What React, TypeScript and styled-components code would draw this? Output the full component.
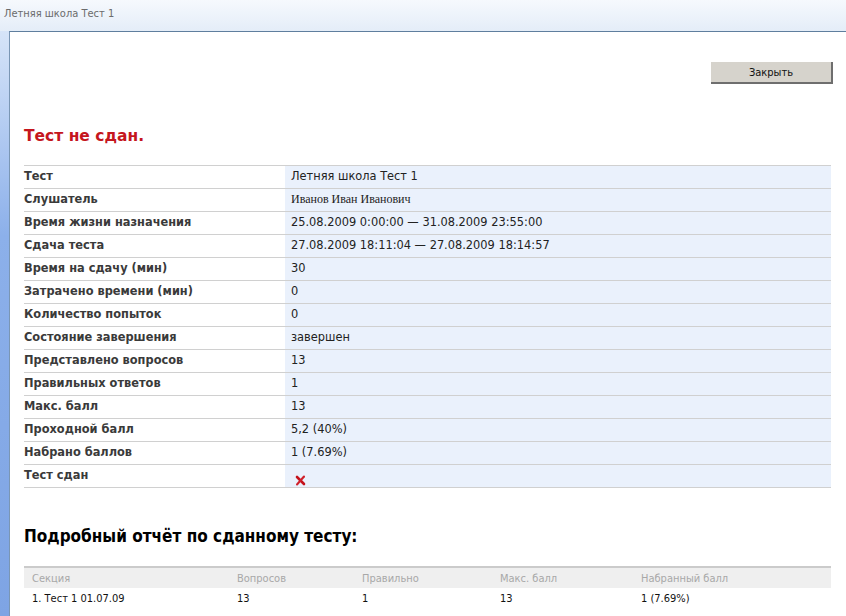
import styled, { createGlobalStyle } from 'styled-components'

const GlobalStyle = createGlobalStyle`
    body {
        margin: 0;
        background: #ffffff;
        font-family: "DejaVu Sans", Verdana, sans-serif;
    }
`

// window caption strip at the very top
const TitleBar = styled.div`
    height: 31px;
    display: flex;
    align-items: center;
    padding-left: 4px;
    background: linear-gradient(#f6f9fd, #e4edf8);
    color: #6b6b6b;
    font-family: "DejaVu Sans Condensed", "Liberation Sans", sans-serif;
    font-size: 11px;
    box-sizing: border-box;
    padding-bottom: 4px;
`

const Body = styled.div`
    display: flex;
    min-height: 585px;
`

const SideStrip = styled.div`
    width: 9px;
    background: linear-gradient(#d6e4f8, #8cb0ea 35%, #7ea4e4);
`

const Panel = styled.div`
    flex: 1;
    background: #ffffff;
    border-top: 1px solid #5f7e9e;
    border-left: 1px solid #7a96b4;
    padding: 30px 15px 0 14px;
`

const ButtonRow = styled.div`
    display: flex;
    justify-content: flex-end;
    margin-right: -2px;
`

const CloseButton = styled.button`
    width: 122px;
    height: 22px;
    background: #d6d3cc;
    border: none;
    border-right: 2px solid #6e6e6e;
    border-bottom: 2px solid #6e6e6e;
    font-family: "DejaVu Sans Condensed", "Liberation Sans", sans-serif;
    font-size: 11px;
    color: #111;
    padding: 0;
`

const Heading = styled.h2`
    margin: 41px 0 0;
    font-size: 15.5px;
    line-height: 22px;
    color: #c5161d;
    font-weight: bold;
`

const InfoTable = styled.div`
    margin-top: 18px;
    border-bottom: 1px solid #d0d0d0;
`

const InfoRow = styled.div`
    display: grid;
    grid-template-columns: 261px 1fr;
    height: 23px;
    box-sizing: border-box;
    border-top: 1px solid #d0d0d0;
`

const Label = styled.div`
    font-size: 11.4px;
    font-weight: bold;
    color: #3a3a3a;
    padding-top: 3px;
`

const Value = styled.div<{ $serif?: boolean }>`
    background: #eaf1fc;
    padding: 3px 0 0 6px;
    font-size: ${p => (p.$serif ? '12px' : '11.4px')};
    font-family: ${p => (p.$serif ? '"Liberation Serif", serif' : '"DejaVu Sans", sans-serif')};
    color: #222;
`

const FailIcon = styled.svg`
    display: block;
    margin: 7px 0 0 4px;
`

const ReportTitle = styled.h3`
    margin: 38px 0 0;
    font-family: "DejaVu Sans Condensed", "Liberation Sans", sans-serif;
    font-size: 17px;
    font-weight: bold;
    color: #000;
`

const ReportTable = styled.div`
    margin-top: 20px;
`

const ReportRow = styled.div<{ $head?: boolean }>`
    display: grid;
    grid-template-columns: 205px 125px 138px 141px 1fr;
    height: 20px;
    align-items: center;
    padding-left: 8px;
    background: ${p => (p.$head ? '#efefef' : 'transparent')};
    border-top: ${p => (p.$head ? '2px solid #cbcbcb' : 'none')};
    color: ${p => (p.$head ? '#a8a8a8' : '#111')};
    font-family: "DejaVu Sans Condensed", "Liberation Sans", sans-serif;
    font-size: 11px;
`

const rows: [string, string][] = [
    ['Тест', 'Летняя школа Тест 1'],
    ['Слушатель', 'Иванов Иван Иванович'],
    ['Время жизни назначения', '25.08.2009 0:00:00 — 31.08.2009 23:55:00'],
    ['Сдача теста', '27.08.2009 18:11:04 — 27.08.2009 18:14:57'],
    ['Время на сдачу (мин)', '30'],
    ['Затрачено времени (мин)', '0'],
    ['Количество попыток', '0'],
    ['Состояние завершения', 'завершен'],
    ['Представлено вопросов', '13'],
    ['Правильных ответов', '1'],
    ['Макс. балл', '13'],
    ['Проходной балл', '5,2 (40%)'],
    ['Набрано баллов', '1 (7.69%)'],
]

const reportHead = ['Секция', 'Вопросов', 'Правильно', 'Макс. балл', 'Набранный балл']
const reportData = ['1. Тест 1 01.07.09', '13', '1', '13', '1 (7.69%)']

function App() {
    return (
        <>
            <GlobalStyle />
            <TitleBar>Летняя школа Тест 1</TitleBar>
            <Body>
                <SideStrip />
                <Panel>
                    <ButtonRow>
                        <CloseButton>Закрыть</CloseButton>
                    </ButtonRow>
                    <Heading>Тест не сдан.</Heading>

                    <InfoTable>
                        {rows.map(([label, value]) => (
                            <InfoRow key={label}>
                                <Label>{label}</Label>
                                <Value $serif={label === 'Слушатель'}>{value}</Value>
                            </InfoRow>
                        ))}
                        <InfoRow>
                            <Label>Тест сдан</Label>
                            <Value>
                                {/* red cross = not passed */}
                                <FailIcon width="11" height="11" viewBox="0 0 11 11">
                                    <path d="M2 2 L9 9" stroke="#c4121b" strokeWidth="2.6" strokeLinecap="round" />
                                    <path d="M9 1.5 L2 9.5" stroke="#d0202a" strokeWidth="2" strokeLinecap="round" />
                                </FailIcon>
                            </Value>
                        </InfoRow>
                    </InfoTable>

                    <ReportTitle>Подробный отчёт по сданному тесту:</ReportTitle>
                    <ReportTable>
                        <ReportRow $head>
                            {reportHead.map(h => <div key={h}>{h}</div>)}
                        </ReportRow>
                        <ReportRow>
                            {reportData.map((d, i) => <div key={i}>{d}</div>)}
                        </ReportRow>
                    </ReportTable>
                </Panel>
            </Body>
        </>
    )
}

export default App
